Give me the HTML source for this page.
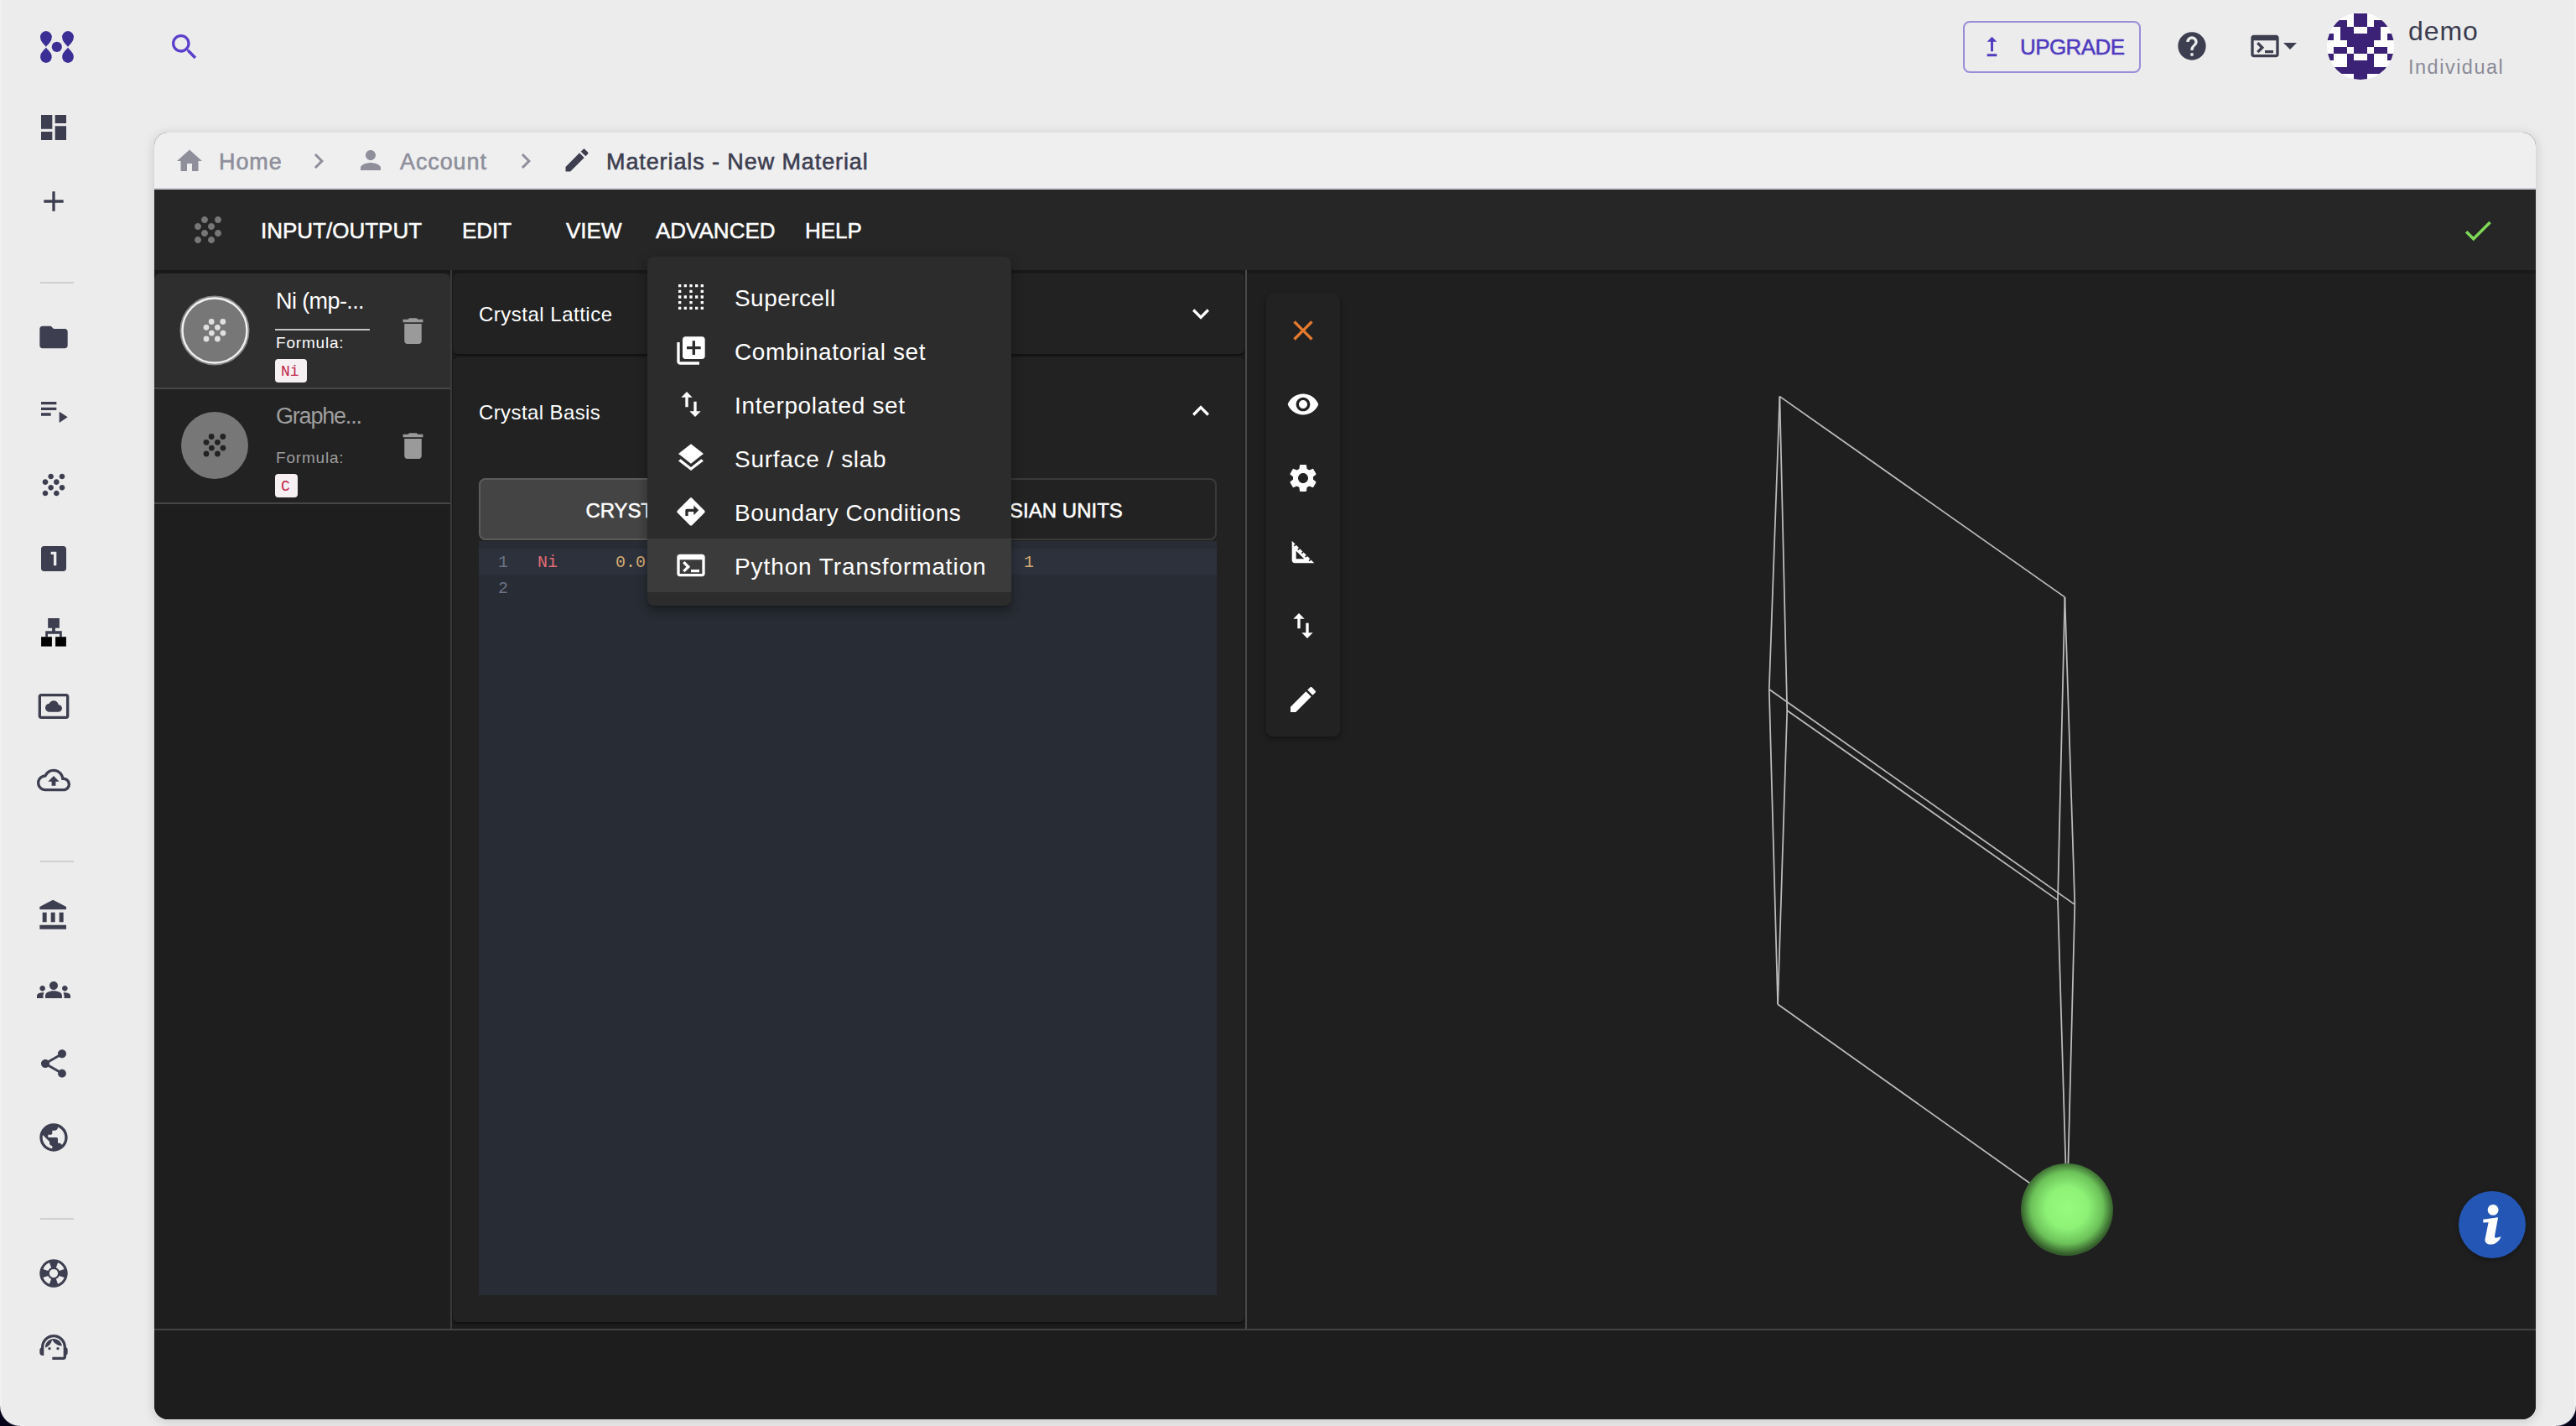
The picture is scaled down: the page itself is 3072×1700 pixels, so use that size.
<!DOCTYPE html>
<html><head><meta charset="utf-8">
<style>
*{box-sizing:border-box;margin:0;padding:0}
html,body{width:3072px;height:1700px;overflow:hidden}
body{background:#ececec;font-family:"Liberation Sans",sans-serif;position:relative}
.a{position:absolute}
svg.i{position:absolute;display:block}
.side path{fill:#3d3e50}
.div{position:absolute;left:48px;width:40px;height:2px;background:#cfcfd2}
.card{position:absolute;left:184px;top:158px;width:2840px;height:1534px;border-radius:16px;overflow:hidden;background:#1d1d1d;box-shadow:0 2px 14px rgba(0,0,0,.16)}
.crumb{position:absolute;left:0;top:0;width:2840px;height:68px;background:#efeff0;border-bottom:2px solid #c9ccd3}
.ct{position:absolute;top:18px;font-size:27px;line-height:34px;color:#8e8f9b;-webkit-text-stroke:.6px #8e8f9b;letter-spacing:.9px}
.tb{position:absolute;left:0;top:68px;width:2840px;height:96px;background:#262626}
.mi{position:absolute;left:692px;height:64px;line-height:64px;font-size:28px;color:#fff;white-space:nowrap}
.tbt{position:absolute;top:23px;font-size:26px;line-height:52px;color:#fff;letter-spacing:0;-webkit-text-stroke:.5px #fff}
</style></head><body>

<!-- window edges -->
<div class="a" style="left:0;top:0;width:2px;height:1700px;background:#f1f1f1"></div>
<div class="a" style="left:3070px;top:0;width:2px;height:1700px;background:#f1f1f1"></div>
<div class="a" style="left:0;top:1676px;width:24px;height:24px;background:radial-gradient(circle at 24px 0,rgba(5,3,26,0) 23.3px,#05031a 24.6px)"></div>
<div class="a" style="left:3048px;top:1676px;width:24px;height:24px;background:radial-gradient(circle at 0 0,rgba(5,3,26,0) 23.3px,#05031a 24.6px)"></div>

<!-- Logo -->
<svg class="i" style="left:40px;top:30px" width="60" height="54" viewBox="0 0 60 54">
 <g fill="#3b2f96">
  <path d="M14.90 26.0 C14.30 24.2 8.60 20.2 8.24 15.70 A6.9 6.9 0 1 1 21.56 15.70 C21.20 20.2 15.50 24.2 14.90 26.0Z"/>
  <path d="M14.90 26.5 C14.30 28.3 8.60 32.3 8.24 36.20 A6.9 6.9 0 1 0 21.56 36.20 C21.20 32.3 15.50 28.3 14.90 26.5Z"/>
  <path d="M41.00 26.0 C40.40 24.2 34.70 20.2 34.34 15.70 A6.9 6.9 0 1 1 47.66 15.70 C47.30 20.2 41.60 24.2 41.00 26.0Z"/>
  <path d="M41.00 26.5 C40.40 28.3 34.70 32.3 34.34 36.20 A6.9 6.9 0 1 0 47.66 36.20 C47.30 32.3 41.60 28.3 41.00 26.5Z"/>
  <circle cx="27.8" cy="25.9" r="6.1"/>
 </g>
</svg>

<!-- Search -->
<svg class="i" style="left:200px;top:36px" width="40" height="40" viewBox="0 0 24 24"><path fill="#5b3fcc" d="M15.5 14h-.79l-.28-.27C15.41 12.59 16 11.11 16 9.5 16 5.91 13.09 3 9.5 3S3 5.91 3 9.5 5.91 16 9.5 16c1.61 0 3.09-.59 4.23-1.57l.27.28v.79l5 4.99L20.49 19l-4.99-5zm-6 0C7.01 14 5 11.99 5 9.5S7.01 5 9.5 5 14 7.01 14 9.5 11.99 14 9.5 14z"/></svg>

<!-- SIDEBAR -->
<div class="side">
 <svg class="i" style="left:44px;top:132px" width="40" height="40" viewBox="0 0 24 24"><path d="M3 13h8V3H3v10zm0 8h8v-6H3v6zm10 0h8V11h-8v10zm0-18v6h8V3h-8z"/></svg>
 <svg class="i" style="left:44px;top:220px" width="40" height="40" viewBox="0 0 24 24"><path d="M19 13h-6v6h-2v-6H5v-2h6V5h2v6h6v2z"/></svg>
 <div class="div" style="top:336px"></div>
 <svg class="i" style="left:44px;top:382px" width="40" height="40" viewBox="0 0 24 24"><path d="M10 4H4c-1.1 0-1.99.9-1.99 2L2 18c0 1.1.9 2 2 2h16c1.1 0 2-.9 2-2V8c0-1.1-.9-2-2-2h-8l-2-2z"/></svg>
 <svg class="i" style="left:44px;top:469px" width="40" height="40" viewBox="0 0 24 24"><path d="M3 10h11v2H3zm0-4h11v2H3zm0 8h7v2H3zm13-1v8l6-4z"/></svg>
 <svg class="i" style="left:44px;top:558px" width="40" height="40" viewBox="0 0 24 24"><path d="M10 12c-1.1 0-2 .9-2 2s.9 2 2 2 2-.9 2-2-.9-2-2-2zM6 8c-1.1 0-2 .9-2 2s.9 2 2 2 2-.9 2-2-.9-2-2-2zm0 8c-1.1 0-2 .9-2 2s.9 2 2 2 2-.9 2-2-.9-2-2-2zm12-8c1.1 0 2-.9 2-2s-.9-2-2-2-2 .9-2 2 .9 2 2 2zm-4 8c-1.1 0-2 .9-2 2s.9 2 2 2 2-.9 2-2-.9-2-2-2zm4-4c-1.1 0-2 .9-2 2s.9 2 2 2 2-.9 2-2-.9-2-2-2zm-4-4c-1.1 0-2 .9-2 2s.9 2 2 2 2-.9 2-2-.9-2-2-2zm-4-4c-1.1 0-2 .9-2 2s.9 2 2 2 2-.9 2-2-.9-2-2-2z"/></svg>
 <svg class="i" style="left:44px;top:646px" width="40" height="40" viewBox="0 0 24 24"><path d="M19 3H5c-1.1 0-2 .9-2 2v14c0 1.1.9 2 2 2h14c1.1 0 2-.9 2-2V5c0-1.1-.9-2-2-2zm-5 14h-2V9h-2V7h4v10z"/></svg>
 <svg class="i" style="left:44px;top:734px" width="40" height="40" viewBox="0 0 40 40"><path d="M13.2 3.1h13.7v11.6h-5v3.5h7.9v7h-2.8v-3.5h-14v3.5h-2.8v-7h7.9v-3.5h-4.9z"/><rect x="5.1" y="25.2" width="12.8" height="11.4"/><rect x="22.1" y="25.2" width="12.8" height="11.4"/></svg>
 <svg class="i" style="left:44px;top:822px" width="40" height="40" viewBox="0 0 24 24"><path d="M9 16h6.5c1.38 0 2.5-1.12 2.5-2.5S16.88 11 15.5 11h-.05c-.24-1.69-1.69-3-3.45-3-1.4 0-2.6.83-3.16 2.02h-.16C7.17 10.18 6 11.45 6 13c0 1.66 1.34 3 3 3zM21 3H3c-1.1 0-2 .9-2 2v14c0 1.1.9 2 2 2h18c1.1 0 2-.9 2-2V5c0-1.1-.9-2-2-2zm0 16.01H3V4.99h18v14.02z"/></svg>
 <svg class="i" style="left:44px;top:910px" width="40" height="40" viewBox="0 0 24 24"><path d="M19.35 10.04C18.67 6.59 15.64 4 12 4 9.11 4 6.6 5.64 5.35 8.04 2.34 8.36 0 10.91 0 14c0 3.31 2.69 6 6 6h13c2.76 0 5-2.24 5-5 0-2.64-2.05-4.78-4.65-4.96zM19 18H6c-2.21 0-4-1.79-4-4 0-2.05 1.53-3.76 3.56-3.97l1.07-.11.5-.95C8.08 7.14 9.94 6 12 6c2.62 0 4.88 1.86 5.39 4.43l.3 1.5 1.53.11c1.56.1 2.78 1.41 2.78 2.96 0 1.65-1.35 3-3 3zM8 13h2.55v3h2.9v-3H16l-4-4z"/></svg>
 <div class="div" style="top:1026px"></div>
 <svg class="i" style="left:44px;top:1071px" width="40" height="40" viewBox="0 0 24 24"><path d="M4 10v7h3v-7H4zm6 0v7h3v-7h-3zM2 22h19v-3H2v3zm14-12v7h3v-7h-3zm-4.5-9L2 6v2h19V6l-9.5-5z"/></svg>
 <svg class="i" style="left:44px;top:1160px" width="40" height="40" viewBox="0 0 24 24"><path d="M12 12.75c1.63 0 3.07.39 4.24.9 1.08.48 1.76 1.56 1.76 2.73V18H6v-1.61c0-1.18.68-2.26 1.76-2.73 1.17-.52 2.61-.91 4.24-.91zM4 13c1.1 0 2-.9 2-2s-.9-2-2-2-2 .9-2 2 .9 2 2 2zm1.13 1.1c-.37-.06-.74-.1-1.13-.1-.99 0-1.93.21-2.78.58C.48 14.9 0 15.62 0 16.43V18h4.5v-1.61c0-.83.23-1.61.63-2.29zM20 13c1.1 0 2-.9 2-2s-.9-2-2-2-2 .9-2 2 .9 2 2 2zm4 3.43c0-.81-.48-1.53-1.22-1.850-.85-.37-1.79-.58-2.78-.58-.39 0-.76.04-1.13.1.4.68.63 1.46.63 2.29V18H24v-1.57zM12 6c1.66 0 3 1.34 3 3s-1.34 3-3 3-3-1.34-3-3 1.34-3 3-3z"/></svg>
 <svg class="i" style="left:44px;top:1248px" width="40" height="40" viewBox="0 0 24 24"><path d="M18 16.08c-.76 0-1.44.3-1.96.77L8.91 12.7c.05-.23.09-.46.09-.7s-.04-.47-.09-.7l7.05-4.11c.54.5 1.25.81 2.04.81 1.66 0 3-1.34 3-3s-1.34-3-3-3-3 1.34-3 3c0 .24.04.47.09.7L8.04 9.81C7.5 9.31 6.79 9 6 9c-1.66 0-3 1.34-3 3s1.34 3 3 3c.79 0 1.5-.31 2.04-.81l7.120 4.16c-.05.21-.08.43-.08.65 0 1.610 1.31 2.92 2.92 2.92 1.61 0 2.92-1.31 2.92-2.92s-1.31-2.92-2.92-2.92z"/></svg>
 <svg class="i" style="left:44px;top:1336px" width="40" height="40" viewBox="0 0 24 24"><path d="M12 2C6.48 2 2 6.48 2 12s4.48 10 10 10 10-4.48 10-10S17.52 2 12 2zm-1 17.93c-3.95-.49-7-3.85-7-7.93 0-.62.08-1.21.21-1.79L9 15v1c0 1.1.9 2 2 2v1.93zm6.9-2.54c-.26-.81-1-1.39-1.9-1.39h-1v-3c0-.55-.45-1-1-1H8v-2h2c.55 0 1-.45 1-1V7h2c1.1 0 2-.9 2-2v-.41c2.93 1.19 5 4.06 5 7.410 0 2.08-.8 3.97-2.1 5.39z"/></svg>
 <div class="div" style="top:1452px"></div>
 <svg class="i" style="left:44px;top:1498px" width="40" height="40" viewBox="0 0 40 40"><path fill-rule="evenodd" d="M20 3.3000000000000007a16.7 16.7 0 1 0 0.001 0zM20 14.9a5.1 5.1 0 1 0 0.001 0zM22.90 13.30L25.00 7.35A13.6 13.6 0 0 1 32.65 15.00L26.70 17.10A7.3 7.3 0 0 0 22.90 13.30ZM22.90 26.70L25.00 32.65A13.6 13.6 0 0 0 32.65 25.00L26.70 22.90A7.3 7.3 0 0 1 22.90 26.70ZM17.10 13.30L15.00 7.35A13.6 13.6 0 0 0 7.35 15.00L13.30 17.10A7.3 7.3 0 0 1 17.10 13.30ZM17.10 26.70L15.00 32.65A13.6 13.6 0 0 1 7.35 25.00L13.30 22.90A7.3 7.3 0 0 0 17.10 26.70Z"/></svg>
 <svg class="i" style="left:44px;top:1586px" width="40" height="40" viewBox="0 0 24 24"><path d="M21 12.22C21 6.73 16.74 3 12 3c-4.69 0-9 3.65-9 9.28-.6.34-1 .98-1 1.72v2c0 1.1.9 2 2 2h1v-6.1c0-3.87 3.13-7 7-7s7 3.130 7 7V19h-8v2h8c1.1 0 2-.9 2-2v-1.22c.59-.31 1-.92 1-1.64v-2.3c0-.7-.41-1.31-1-1.62z"/><circle cx="9" cy="13" r="1" fill="#3d3e50"/><circle cx="15" cy="13" r="1" fill="#3d3e50"/><path d="M18 11.03C17.52 8.18 15.04 6 12.05 6c-3.03 0-6.29 2.51-6.03 6.45 2.47-1.01 4.33-3.21 4.86-5.89 1.31 2.63 4 4.44 7.12 4.47z"/></svg>
</div>

<!-- TOP RIGHT -->
<div class="a" style="left:2341px;top:25px;width:212px;height:62px;border:2px solid #9b8dd8;border-radius:8px"></div>
<svg class="i" style="left:2358px;top:38px" width="35" height="35" viewBox="0 0 24 24"><path fill="#4f3bbf" d="M16 18v2H8v-2h8zM11 7.99V16h2V7.99h3L12 4 8 7.99h3z"/></svg>
<div class="a" style="left:2409px;top:38px;font-size:26px;line-height:36px;color:#4f3bbf;-webkit-text-stroke:.5px #4f3bbf;letter-spacing:-.6px">UPGRADE</div>
<svg class="i" style="left:2594px;top:35px" width="40" height="40" viewBox="0 0 24 24"><path fill="#3d3e50" d="M12 2C6.48 2 2 6.48 2 12s4.48 10 10 10 10-4.48 10-10S17.52 2 12 2zm1 17h-2v-2h2v2zm2.07-7.75l-.9.92C13.45 12.9 13 13.5 13 15h-2v-.5c0-1.1.45-2.1 1.17-2.83l1.24-1.26c.37-.36.59-.86.59-1.41 0-1.1-.9-2-2-2s-2 .9-2 2H8c0-2.21 1.79-4 4-4s4 1.790 4 4c0 .88-.36 1.68-.93 2.25z"/></svg>
<svg class="i" style="left:2681px;top:35px" width="40" height="40" viewBox="0 0 24 24"><path fill="#3d3e50" d="M20 4H4c-1.11 0-2 .9-2 2v12c0 1.1.89 2 2 2h16c1.1 0 2-.9 2-2V6c0-1.1-.9-2-2-2zm0 14H4V8h16v10zm-2-1h-6v-2h6v2zM7.5 17l-1.41-1.41L8.67 13l-2.59-2.59L7.5 9l4 4-4 4z"/></svg>
<svg class="i" style="left:2719px;top:42px" width="24" height="24" viewBox="0 0 24 24"><path fill="#3d3e50" d="M4 9l8 8 8-8z"/></svg>
<svg class="i" style="left:2775px;top:15px" width="80" height="80" viewBox="0 0 80 80">
 <defs><clipPath id="avc"><circle cx="40" cy="40" r="40"/></clipPath></defs>
 <g clip-path="url(#avc)"><rect width="80" height="80" fill="#fff"/>
 <g fill="#3b2277"><rect x="32" y="1" width="16" height="8"/><rect x="8" y="9" width="16" height="8"/><rect x="32" y="9" width="16" height="8"/><rect x="56" y="9" width="16" height="8"/><rect x="16" y="17" width="16" height="8"/><rect x="48" y="17" width="16" height="8"/><rect x="0" y="25" width="8" height="8"/><rect x="16" y="25" width="48" height="8"/><rect x="72" y="25" width="8" height="8"/><rect x="24" y="33" width="32" height="8"/><rect x="8" y="41" width="16" height="8"/><rect x="32" y="41" width="16" height="8"/><rect x="56" y="41" width="16" height="8"/><rect x="0" y="49" width="8" height="8"/><rect x="24" y="49" width="8" height="8"/><rect x="48" y="49" width="8" height="8"/><rect x="72" y="49" width="8" height="8"/><rect x="24" y="57" width="32" height="8"/><rect x="8" y="65" width="64" height="8"/><rect x="32" y="73" width="16" height="8"/></g></g>
</svg>
<div class="a" style="left:2872px;top:19px;font-size:32px;line-height:36px;color:#3a3b4f;letter-spacing:.9px">demo</div>
<div class="a" style="left:2872px;top:64px;font-size:23.5px;line-height:32px;color:#8a8a98;letter-spacing:1.5px">Individual</div>

<!-- CARD -->
<div class="card" id="card">
 <div class="crumb">
  <svg class="i" style="left:24px;top:16px" width="36" height="36" viewBox="0 0 24 24"><path fill="#8e8f9b" d="M10 20v-6h4v6h5v-8h3L12 3 2 12h3v8z"/></svg>
  <div class="ct" style="left:77px">Home</div>
  <svg class="i" style="left:178px;top:16px" width="36" height="36" viewBox="0 0 24 24"><path fill="#8e8f9b" d="M10 6L8.59 7.41 13.17 12l-4.58 4.59L10 18l6-6z"/></svg>
  <svg class="i" style="left:240px;top:15px" width="36" height="36" viewBox="0 0 24 24"><path fill="#8e8f9b" d="M12 12c2.21 0 4-1.79 4-4s-1.79-4-4-4-4 1.79-4 4 1.79 4 4 4zm0 2c-2.67 0-8 1.34-8 4v2h16v-2c0-2.66-5.33-4-8-4z"/></svg>
  <div class="ct" style="left:293px">Account</div>
  <svg class="i" style="left:425px;top:16px" width="36" height="36" viewBox="0 0 24 24"><path fill="#8e8f9b" d="M10 6L8.59 7.41 13.17 12l-4.58 4.59L10 18l6-6z"/></svg>
  <svg class="i" style="left:486px;top:15px" width="36" height="36" viewBox="0 0 24 24"><path fill="#3d3e50" d="M3 17.25V21h3.75L17.81 9.94l-3.75-3.75L3 17.25zM20.71 7.04c.39-.39.39-1.02 0-1.41l-2.34-2.34c-.39-.39-1.02-.39-1.41 0l-1.83 1.83 3.75 3.75 1.83-1.83z"/></svg>
  <div class="ct" style="left:539px;color:#3d3e50;-webkit-text-stroke:.6px #3d3e50">Materials - New Material</div>
 </div>
 <div class="tb">
  <svg class="i" style="left:40px;top:24px" width="48" height="48" viewBox="0 0 24 24"><path fill="#777" d="M10 12c-1.1 0-2 .9-2 2s.9 2 2 2 2-.9 2-2-.9-2-2-2zM6 8c-1.1 0-2 .9-2 2s.9 2 2 2 2-.9 2-2-.9-2-2-2zm0 8c-1.1 0-2 .9-2 2s.9 2 2 2 2-.9 2-2-.9-2-2-2zm12-8c1.1 0 2-.9 2-2s-.9-2-2-2-2 .9-2 2 .9 2 2 2zm-4 8c-1.1 0-2 .9-2 2s.9 2 2 2 2-.9 2-2-.9-2-2-2zm4-4c-1.1 0-2 .9-2 2s.9 2 2 2 2-.9 2-2-.9-2-2-2zm-4-4c-1.1 0-2 .9-2 2s.9 2 2 2 2-.9 2-2-.9-2-2-2zm-4-4c-1.1 0-2 .9-2 2s.9 2 2 2 2-.9 2-2-.9-2-2-2z"/></svg>
  <div class="tbt" style="left:127px">INPUT/OUTPUT</div>
  <div class="tbt" style="left:367px">EDIT</div>
  <div class="tbt" style="left:491px">VIEW</div>
  <div class="tbt" style="left:598px">ADVANCED</div>
  <div class="tbt" style="left:776px">HELP</div>
  <svg class="i" style="left:2750px;top:28px" width="42" height="42" viewBox="0 0 24 24"><path fill="#7ed957" d="M9 16.17L4.83 12l-1.42 1.41L9 19 21 7l-1.41-1.41z"/></svg>
 </div>
 <div class="a" style="left:0;top:164px;width:2840px;height:4px;background:#191919"></div>
 <!-- materials list -->
 <div class="a" style="left:0;top:168px;width:353px;height:1259px;background:#1e1e1e"></div>
 <div class="a" style="left:0;top:168px;width:353px;height:136px;background:#2e2e2e;border-radius:8px 8px 0 0"></div>
 <div class="a" style="left:0;top:304px;width:353px;height:2px;background:#464646"></div>
 <div class="a" style="left:0;top:306px;width:353px;height:135px;background:#222"></div>
 <div class="a" style="left:0;top:441px;width:353px;height:2px;background:#464646"></div>
 <div class="a" style="left:353px;top:164px;width:2px;height:1263px;background:#3a3a3a"></div>
 <!-- item 1 -->
 <svg class="i" style="left:30px;top:194px" width="84" height="84" viewBox="0 0 84 84">
  <circle cx="42" cy="42" r="40.5" fill="#777" stroke="#8a8a8a" stroke-width="2"/>
  <circle cx="42" cy="42" r="38.5" fill="none" stroke="#f2f2f2" stroke-width="2.4"/>
  <g fill="#e0e0e0"><circle cx="38.2" cy="31.5" r="3.4"/><circle cx="51.8" cy="31.5" r="3.4"/><circle cx="32" cy="38.3" r="3.4"/><circle cx="45.4" cy="38.3" r="3.4"/><circle cx="38.4" cy="45.1" r="3.4"/><circle cx="52" cy="45.1" r="3.4"/><circle cx="32" cy="52" r="3.4"/><circle cx="45.4" cy="52" r="3.4"/></g>
 </svg>
 <div class="a" style="left:145px;top:184px;font-size:27px;line-height:34px;color:#fff;letter-spacing:-.6px">Ni (mp-...</div>
 <div class="a" style="left:144px;top:234px;width:113px;height:2px;background:#c4c4c4"></div>
 <div class="a" style="left:145px;top:240px;font-size:19px;line-height:22px;color:#fff;letter-spacing:.8px">Formula:</div>
 <div class="a" style="left:144px;top:270px;width:38px;height:28px;background:#f7f0f2;border-radius:4px"></div>
 <div class="a" style="left:151px;top:274px;font-family:'Liberation Mono',monospace;font-size:18px;line-height:22px;color:#c0264a">Ni</div>
 <svg class="i" style="left:288px;top:216px" width="41" height="41" viewBox="0 0 24 24"><path fill="#9a9a9a" d="M6 19c0 1.1.9 2 2 2h8c1.1 0 2-.9 2-2V7H6v12zM19 4h-3.5l-1-1h-5l-1 1H5v2h14V4z"/></svg>
 <!-- item 2 -->
 <svg class="i" style="left:30px;top:331px" width="84" height="84" viewBox="0 0 84 84">
  <circle cx="42" cy="42" r="40" fill="#777"/>
  <g fill="#222"><circle cx="38.2" cy="31.5" r="3.4"/><circle cx="51.8" cy="31.5" r="3.4"/><circle cx="32" cy="38.3" r="3.4"/><circle cx="45.4" cy="38.3" r="3.4"/><circle cx="38.4" cy="45.1" r="3.4"/><circle cx="52" cy="45.1" r="3.4"/><circle cx="32" cy="52" r="3.4"/><circle cx="45.4" cy="52" r="3.4"/></g>
 </svg>
 <div class="a" style="left:145px;top:321px;font-size:27px;line-height:34px;color:#9e9e9e;letter-spacing:-1.2px">Graphe...</div>
 <div class="a" style="left:145px;top:377px;font-size:19px;line-height:22px;color:#9e9e9e;letter-spacing:.8px">Formula:</div>
 <div class="a" style="left:144px;top:407px;width:27px;height:28px;background:#f7f0f2;border-radius:4px"></div>
 <div class="a" style="left:151px;top:411px;font-family:'Liberation Mono',monospace;font-size:18px;line-height:22px;color:#c0264a">C</div>
 <svg class="i" style="left:288px;top:353px" width="41" height="41" viewBox="0 0 24 24"><path fill="#9a9a9a" d="M6 19c0 1.1.9 2 2 2h8c1.1 0 2-.9 2-2V7H6v12zM19 4h-3.5l-1-1h-5l-1 1H5v2h14V4z"/></svg>

 <!-- middle panel -->
 <div class="a" style="left:355px;top:168px;width:946px;height:1259px;background:#1b1b1b"></div>
 <div class="a" style="left:356px;top:168px;width:944px;height:96px;background:#222;border-radius:6px;box-shadow:0 2px 2px rgba(0,0,0,.35)"></div>
 <div class="a" style="left:387px;top:202px;font-size:24px;line-height:30px;color:#fff;letter-spacing:.5px">Crystal Lattice</div>
 <svg class="i" style="left:1228px;top:196px" width="40" height="40" viewBox="0 0 24 24"><path fill="#fff" d="M16.59 8.59L12 13.17 7.41 8.59 6 10l6 6 6-6z"/></svg>
 <div class="a" style="left:356px;top:268px;width:944px;height:1150px;background:#222;border-radius:6px;box-shadow:0 2px 2px rgba(0,0,0,.35)"></div>
 <div class="a" style="left:387px;top:319px;font-size:24px;line-height:30px;color:#fff;letter-spacing:.4px">Crystal Basis</div>
 <svg class="i" style="left:1228px;top:312px" width="40" height="40" viewBox="0 0 24 24"><path fill="#fff" d="M12 8l-6 6 1.41 1.41L12 10.830l4.59 4.58L18 14z"/></svg>
 <!-- tabs -->
 <div class="a" style="left:387px;top:412px;width:880px;height:74px;border:2px solid #3a3a3a;border-radius:8px"></div>
 <div class="a" style="left:387px;top:412px;width:440px;height:74px;background:#444;border:2px solid #5c5c5c;border-radius:8px 0 0 8px"></div>
 <div class="a" style="left:387px;top:414px;width:440px;height:74px;line-height:74px;text-align:center;font-size:24px;color:#fff;-webkit-text-stroke:.5px #fff;letter-spacing:-.1px">CRYSTAL UNITS</div>
 <div class="a" style="left:827px;top:414px;width:440px;height:74px;line-height:74px;text-align:center;font-size:24px;color:#fff;-webkit-text-stroke:.5px #fff;letter-spacing:0">CARTESIAN UNITS</div>
 <!-- editor -->
 <div class="a" style="left:387px;top:487px;width:880px;height:899px;background:#282c34"></div>
 <div class="a" style="left:387px;top:496px;width:880px;height:31px;background:#2c313c"></div>
 <div class="a" style="left:410px;top:501px;font-family:'Liberation Mono',monospace;font-size:20px;line-height:24px;color:#6b7385">1</div>
 <div class="a" style="left:410px;top:532px;font-family:'Liberation Mono',monospace;font-size:20px;line-height:24px;color:#6b7385">2</div>
 <div class="a" style="left:457px;top:501px;font-family:'Liberation Mono',monospace;font-size:20px;line-height:24px;color:#e06c75">Ni</div>
 <div class="a" style="left:550px;top:501px;font-family:'Liberation Mono',monospace;font-size:20px;line-height:24px;color:#d7ad72">0.0</div>
 <div class="a" style="left:1037px;top:501px;font-family:'Liberation Mono',monospace;font-size:20px;line-height:24px;color:#d7ad72">1</div>

 <!-- right divider and viewer -->
 <div class="a" style="left:1301px;top:164px;width:2px;height:1263px;background:#4a4a4a"></div>
 <div class="a" style="left:1303px;top:168px;width:1537px;height:1259px;background:#1f1f1f"></div>
 <div class="a" style="left:0;top:1428px;width:2840px;height:106px;background:#1d1d1d"></div>
 <div class="a" style="left:0;top:1426px;width:2840px;height:2px;background:#424242"></div>

 <!-- viewer toolbar -->
 <div class="a" style="left:1326px;top:192px;width:88px;height:528px;background:#222;border-radius:8px;box-shadow:0 3px 6px rgba(0,0,0,.35)"></div>
 <svg class="i" style="left:1350px;top:216px" width="40" height="40" viewBox="0 0 24 24"><path fill="#e57a2e" d="M19 6.41L17.59 5 12 10.59 6.41 5 5 6.41 10.59 12 5 17.59 6.41 19 12 13.41 17.59 19 19 17.59 13.41 12z"/></svg>
 <svg class="i" style="left:1350px;top:304px" width="40" height="40" viewBox="0 0 24 24"><path fill="#fff" d="M12 4.5C7 4.5 2.73 7.61 1 12c1.73 4.39 6 7.5 11 7.5s9.27-3.11 11-7.5c-1.73-4.39-6-7.5-11-7.5zM12 17c-2.76 0-5-2.24-5-5s2.24-5 5-5 5 2.24 5 5-2.24 5-5 5zm0-8c-1.66 0-3 1.34-3 3s1.34 3 3 3 3-1.34 3-3-1.34-3-3-3z"/></svg>
 <svg class="i" style="left:1350px;top:392px" width="40" height="40" viewBox="0 0 24 24"><path fill="#fff" d="M19.14 12.94c.04-.3.06-.61.06-.94 0-.32-.02-.64-.07-.94l2.03-1.58c.18-.14.23-.41.12-.61l-1.92-3.32c-.12-.22-.37-.29-.59-.22l-2.39.96c-.5-.38-1.03-.7-1.62-.94l-.36-2.54c-.04-.24-.24-.41-.48-.41h-3.84c-.24 0-.43.17-.47.41l-.36 2.54c-.59.24-1.13.57-1.62.94l-2.39-.96c-.22-.08-.47 0-.59.22L2.74 8.87c-.12.21-.08.47.12.61l2.03 1.58c-.05.3-.09.63-.09.94s.02.64.07.94l-2.03 1.58c-.18.14-.23.41-.12.61l1.92 3.32c.12.22.37.29.59.22l2.39-.96c.5.38 1.03.7 1.62.94l.36 2.54c.05.24.24.41.48.41h3.84c.24 0 .44-.17.47-.41l.36-2.54c.59-.24 1.13-.56 1.62-.94l2.39.96c.22.08.47 0 .59-.22l1.92-3.32c.12-.22.07-.47-.12-.61l-2.01-1.58zM12 15.6c-1.98 0-3.6-1.62-3.6-3.6s1.62-3.6 3.6-3.6 3.6 1.62 3.6 3.6-1.62 3.6-3.6 3.6z"/></svg>
 <svg class="i" style="left:1350px;top:480px" width="40" height="40" viewBox="0 0 24 24"><path fill="#fff" d="M17.66 17.66l-1.06 1.06-.71-.71 1.06-1.06-1.94-1.94-1.06 1.06-.71-.71 1.06-1.06-1.94-1.94-1.06 1.06-.71-.71 1.06-1.06L9.7 9.7l-1.06 1.06-.71-.71 1.06-1.06-1.94-1.94-1.06 1.06-.71-.71 1.06-1.06L4 4v14c0 1.1.9 2 2 2h14l-2.34-2.34zM7 17v-5.76L12.76 17H7z"/></svg>
 <svg class="i" style="left:1350px;top:568px" width="40" height="40" viewBox="0 0 24 24"><path fill="#fff" d="M16 17.01V10h-2v7.01h-3L15 21l4-3.99h-3zM9 3L5 6.99h3V14h2V6.99h3L9 3z"/></svg>
 <svg class="i" style="left:1350px;top:656px" width="40" height="40" viewBox="0 0 24 24"><path fill="#fff" d="M3 17.25V21h3.75L17.81 9.94l-3.75-3.75L3 17.25zM20.71 7.04c.39-.39.39-1.02 0-1.41l-2.34-2.34c-.39-.39-1.02-.39-1.41 0l-1.83 1.83 3.75 3.75 1.83-1.83z"/></svg>

 <!-- structure -->
 <svg class="i" style="left:-184px;top:-158px" width="3072" height="1700" viewBox="0 0 3072 1700">
  <defs><radialGradient id="sph" cx="0.5" cy="0.48" r="0.5"><stop offset="0" stop-color="#97fb7e"/><stop offset="0.45" stop-color="#8ef277"/><stop offset="0.78" stop-color="#6cc259"/><stop offset="1" stop-color="#355f2c"/></radialGradient></defs>
  <g stroke="#bdbdbd" stroke-width="1.75" fill="none">
   <line x1="2122.4" y1="472.6" x2="2462.4" y2="711.9"/>
   <line x1="2122.4" y1="472.6" x2="2109.8" y2="821.7"/>
   <line x1="2122.4" y1="472.6" x2="2131.2" y2="847"/>
   <line x1="2462.4" y1="711.9" x2="2474.3" y2="1078.4"/>
   <line x1="2462.4" y1="711.9" x2="2454" y2="1073.1"/>
   <line x1="2109.8" y1="821.7" x2="2474.3" y2="1078.4"/>
   <line x1="2131.2" y1="847" x2="2454" y2="1073.1"/>
   <line x1="2109.8" y1="821.7" x2="2120.1" y2="1197.3"/>
   <line x1="2131.2" y1="847" x2="2120.1" y2="1197.3"/>
   <line x1="2474.3" y1="1078.4" x2="2465" y2="1442"/>
   <line x1="2454" y1="1073.1" x2="2465" y2="1442"/>
   <line x1="2120.1" y1="1197.3" x2="2465" y2="1442"/>
  </g>
  <circle cx="2465" cy="1442" r="55" fill="url(#sph)"/>
 </svg>

 <!-- info button -->
 <div class="a" style="left:2748px;top:1262px;width:80px;height:80px;border-radius:50%;background:#2457b5;box-shadow:0 2px 6px rgba(0,0,0,.3)"></div>
 <svg class="i" style="left:2748px;top:1262px" width="80" height="80" viewBox="0 0 80 80"><g fill="#fff"><circle cx="41.1" cy="22.4" r="6.4"/><path d="M29.2 33.8 L47.1 31.3 L43.1 53 C42.7 55.2 43.6 56.2 45.6 55.6 L50.7 54.3 C48.2 60.2 43.4 63.6 38.5 63.6 C33.2 63.6 30.9 61 31.6 57 L35.6 37.2 L29.4 37.4 Z"/></g></svg>

 <!-- menu -->
 <div class="a" style="left:588px;top:148px;width:434px;height:416px;background:#2c2c2c;border-radius:8px;box-shadow:0 5px 5px -3px rgba(0,0,0,.2),0 8px 10px 1px rgba(0,0,0,.14),0 3px 14px 2px rgba(0,0,0,.12)"></div>
 <div class="a" style="left:588px;top:484px;width:434px;height:64px;background:#3b3b3b"></div>
 <div class="mi" style="top:166px;letter-spacing:.44px">Supercell</div>
 <div class="mi" style="top:230px;letter-spacing:.6px">Combinatorial set</div>
 <div class="mi" style="top:294px;letter-spacing:.67px">Interpolated set</div>
 <div class="mi" style="top:358px;letter-spacing:.73px">Surface / slab</div>
 <div class="mi" style="top:422px;letter-spacing:.55px">Boundary Conditions</div>
 <div class="mi" style="top:486px;letter-spacing:.9px">Python Transformation</div>
 <svg class="i" style="left:620px;top:176px" width="40" height="40" viewBox="0 0 24 24"><path fill="#fff" d="M7 5h2V3H7v2zm0 8h2v-2H7v2zm0 8h2v-2H7v2zm4-4h2v-2h-2v2zm0 4h2v-2h-2v2zm-8 0h2v-2H3v2zm0-4h2v-2H3v2zm0-4h2v-2H3v2zm0-4h2V7H3v2zm0-4h2V3H3v2zm8 8h2v-2h-2v2zm8 4h2v-2h-2v2zm0-4h2v-2h-2v2zm0 8h2v-2h-2v2zm0-12h2V7h-2v2zm-8 0h2V7h-2v2zm8-6v2h2V3h-2zm-8 2h2V3h-2v2zm4 16h2v-2h-2v2zm0-8h2v-2h-2v2zm0-8h2V3h-2v2z"/></svg>
 <svg class="i" style="left:620px;top:240px" width="40" height="40" viewBox="0 0 24 24"><path fill="#fff" d="M4 6H2v14c0 1.1.9 2 2 2h14v-2H4V6zm16-4H8c-1.1 0-2 .9-2 2v12c0 1.1.9 2 2 2h12c1.1 0 2-.9 2-2V4c0-1.1-.9-2-2-2zm-1 9h-4v4h-2v-4H9V9h4V5h2v4h4v2z"/></svg>
 <svg class="i" style="left:620px;top:304px" width="40" height="40" viewBox="0 0 24 24"><path fill="#fff" d="M16 17.01V10h-2v7.01h-3L15 21l4-3.99h-3zM9 3L5 6.99h3V14h2V6.99h3L9 3z"/></svg>
 <svg class="i" style="left:620px;top:368px" width="40" height="40" viewBox="0 0 24 24"><path fill="#fff" d="M11.99 18.54l-7.37-5.73L3 14.07l9 7 9-7-1.63-1.27-7.38 5.74zM12 16l7.36-5.73L21 9l-9-7-9 7 1.63 1.27L12 16z"/></svg>
 <svg class="i" style="left:620px;top:432px" width="40" height="40" viewBox="0 0 24 24"><path fill="#fff" d="M21.71 11.29l-9-9c-.39-.39-1.02-.39-1.41 0l-9 9c-.39.39-.39 1.02 0 1.41l9 9c.39.39 1.02.39 1.41 0l9-9c.39-.38.39-1.01 0-1.41zM14 14.5V12h-4v3H8v-4c0-.55.45-1 1-1h5V7.5l3.5 3.5-3.5 3.5z"/></svg>
 <svg class="i" style="left:620px;top:496px" width="40" height="40" viewBox="0 0 24 24"><path fill="#fff" d="M20 4H4c-1.11 0-2 .9-2 2v12c0 1.1.89 2 2 2h16c1.1 0 2-.9 2-2V6c0-1.1-.9-2-2-2zm0 14H4V8h16v10zm-2-1h-6v-2h6v2zM7.5 17l-1.41-1.41L8.67 13l-2.59-2.59L7.5 9l4 4-4 4z"/></svg>
</div>

</body></html>
